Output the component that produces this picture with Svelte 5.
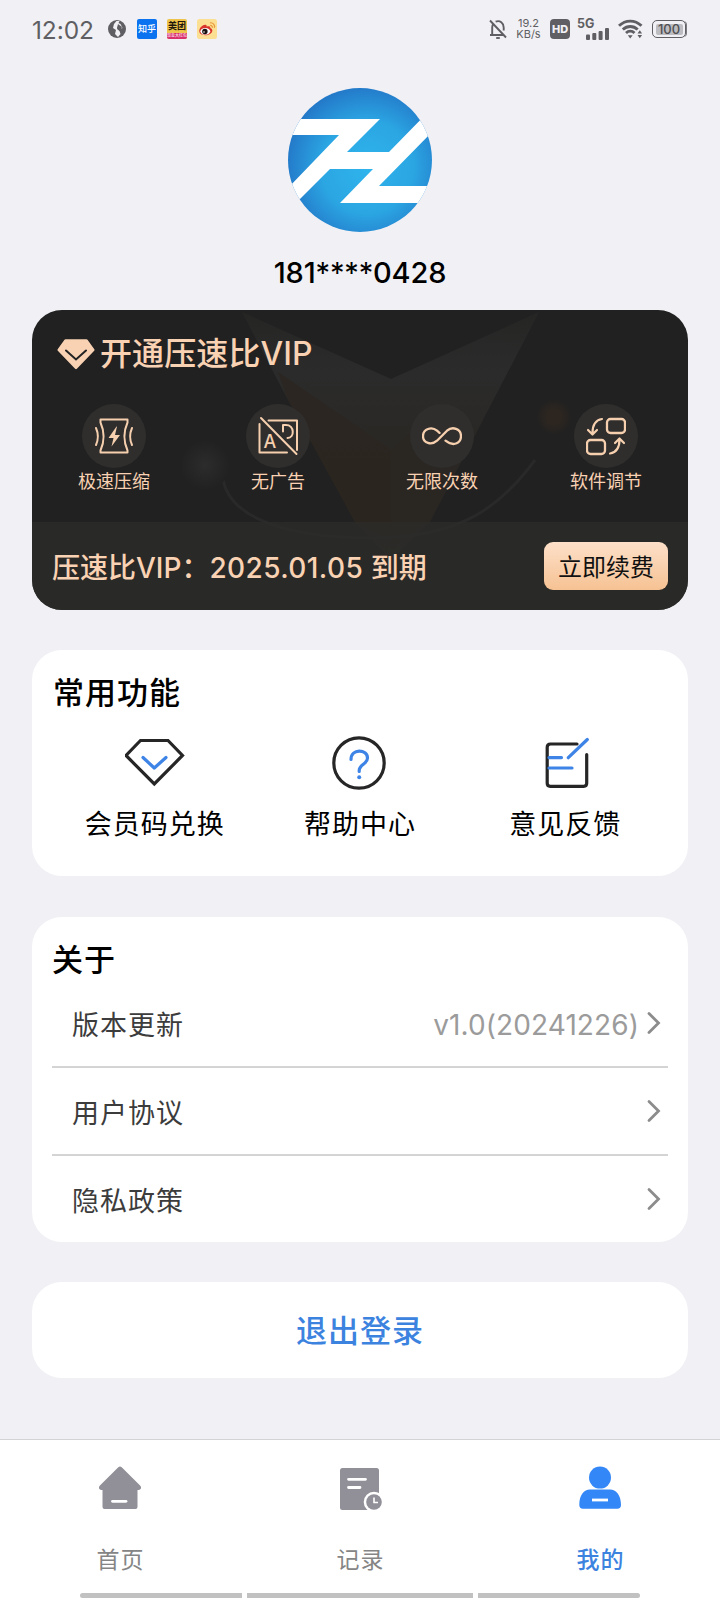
<script lang="ts">
  const perks = [
    { id: "compress", label: "极速压缩" },
    { id: "noad", label: "无广告" },
    { id: "unlimited", label: "无限次数" },
    { id: "adjust", label: "软件调节" },
  ];

  const features = [
    { id: "redeem", label: "会员码兑换" },
    { id: "help", label: "帮助中心" },
    { id: "feedback", label: "意见反馈" },
  ];

  const aboutRows = [
    { label: "版本更新", value: "v1.0(20241226)" },
    { label: "用户协议", value: "" },
    { label: "隐私政策", value: "" },
  ];

  const tabs = [
    { id: "home", label: "首页" },
    { id: "history", label: "记录" },
    { id: "mine", label: "我的" },
  ];

  let activeTab = $state("mine");
</script>

<div class="page">
  <header class="status-bar">
    <span class="time">12:02</span>
    <svg class="globe" width="18" height="18" viewBox="0 0 18 18">
      <circle cx="9" cy="9" r="9" fill="#5f5f63" />
      <path d="M8.500 1 6 4 5 8l3 2-1 4 3 3 2.500-3-1-3-2.500-2 1-3 2 3 2.500-1-2-4-2-1 1-2z" fill="#f1f0f5" />
      <path d="m10 4 4 3-2 4-3-3z" fill="#5f5f63" />
    </svg>
    <span class="app-icon zhihu">知乎</span>
    <span class="app-icon meituan"><b>美团</b><i>现金大红包</i></span>
    <svg class="app-icon" width="20" height="20" viewBox="0 0 20 20">
      <rect width="20" height="20" rx="1.5" fill="#fbe094" />
      <path d="M2.300 12c0-3.500 4.200-7 6.800-6 .7.3.6 1 .5 1.600 1.800-.8 4-.6 3.700 1.300 1.400.5 2.300 1.500 2 3-.5 2.500-3.500 4.300-7 4.300-3.600 0-6-1.700-6-4.200z" fill="#d9352b" />
      <ellipse cx="8.300" cy="12.300" rx="4.900" ry="3.300" fill="#fff" />
      <circle cx="7.900" cy="12.500" r="2.700" fill="#18110f" />
      <circle cx="7" cy="13" r=".8" fill="#fff" />
      <path d="M13.200 6.500c1.400-.2 2.500 1 2.100 2.300M13 3.800c3-.5 5.300 2.200 4.400 5" fill="none" stroke="#e8983a" stroke-width="1.200" />
    </svg>

    <div class="status-right">
      <svg width="18" height="20" viewBox="0 0 18 20" fill="none" stroke="#5f5f63" stroke-width="1.900">
        <path d="M3.200 16V8.500c0-1.400.4-2.600 1.100-3.600M6.600 2.700C11 .9 14.700 4 14.700 8.500v3M1 16h13.500M1 1.500l16 17" />
        <path d="M7.200 19h3.600" />
      </svg>
      <span class="speed"><span>19.2</span><span>KB/s</span></span>
      <span class="hd">HD</span>
      <span class="signal">
        <span>5G</span>
        <svg width="24" height="12" viewBox="0 0 24 12" fill="#5f5f63">
          <rect x="0" y="6.500" width="4" height="5.500" rx="1" />
          <rect x="6.300" y="5" width="4" height="7" rx="1" />
          <rect x="12.600" y="3" width="4" height="9" rx="1" />
          <rect x="19" y="0" width="4" height="12" rx="1" />
        </svg>
      </span>
      <svg class="wifi" width="25" height="20" viewBox="0 0 25 20">
        <g fill="none" stroke="#5f5f63" stroke-width="2.900">
          <path d="M1 6.800c6.500-6.300 16-6.300 22.500 0" />
          <path d="M4.800 10.500c4.400-4 10.500-4 14.900 0" />
          <path d="M8 14c2.600-2.300 6-2.300 8.500 0" />
        </g>
        <path d="M9.800 16.300h4.900L12.200 19.500zM19.500 14.500l2.300-3.300 2.300 3.300zM19.500 16h4.600l-2.300 3.300z" fill="#5f5f63" />
      </svg>
      <span class="battery"><span>100</span></span>
    </div>
  </header>

  <section class="profile">
    <svg width="144" height="144" viewBox="0 0 144 144">
      <defs>
        <radialGradient id="logoFill" cx=".55" cy=".55" r=".58">
          <stop offset="0" stop-color="#2fb4ec" />
          <stop offset=".55" stop-color="#2ba6e3" />
          <stop offset="1" stop-color="#2376c7" />
        </radialGradient>
        <clipPath id="logoClip"><circle cx="72" cy="72" r="72" /></clipPath>
      </defs>
      <circle cx="72" cy="72" r="72" fill="url(#logoFill)" />
      <g clip-path="url(#logoClip)" fill="#fff">
        <path d="M0 31H92L59 64H101L144 20V44L91 98H144V115H52L85 81H42L0 123V100L51 47H0Z" />
      </g>
    </svg>
    <div class="phone">181<span>****</span>0428</div>
  </section>

  <section class="vip">
    <svg class="vip-art" width="656" height="300" viewBox="0 0 656 300">
      <defs>
        <linearGradient id="starFill" x1="0" y1="0" x2="0" y2="1">
          <stop offset="0" stop-color="#252624" />
          <stop offset=".25" stop-color="#2b2b2b" />
          <stop offset=".5" stop-color="#2a2825" />
          <stop offset=".8" stop-color="#2a2622" />
          <stop offset="1" stop-color="#292827" />
        </linearGradient>
        <radialGradient id="greyDot">
          <stop offset="0" stop-color="#2c2c2c" />
          <stop offset="1" stop-color="#212121" />
        </radialGradient>
        <radialGradient id="brownDot">
          <stop offset=".4" stop-color="#2d2620" />
          <stop offset="1" stop-color="#212121" />
        </radialGradient>
      </defs>
      <path d="M210 2 359 69 507 2 398 212 359 250 323 212 256 90Z" fill="url(#starFill)" />
      <path d="m246 62 113 78v90l-36-18-67-122z" fill="#2c2520" opacity=".7" />
      <path d="M359 140 400 105V208l-41 30z" fill="#2c2622" opacity=".6" />
      <path d="M192 150C180 205 250 228 340 228S470 195 503 150" fill="none" stroke="#292929" stroke-width="3" />
      <circle cx="173" cy="155" r="25" fill="url(#greyDot)" />
      <circle cx="522" cy="107" r="18" fill="url(#brownDot)" />
    </svg>

    <div class="vip-main">
      <h2>
        <svg width="38" height="31" viewBox="0 0 38 31">
          <path d="M8.500 1.500h21L36.300 11 19 28.800 1.700 11z" fill="#f9d2b3" stroke="#f9d2b3" stroke-width="2.500" stroke-linejoin="round" />
          <path d="m9 11.500 10 9 10-9" fill="none" stroke="#232323" stroke-width="2" stroke-linecap="round" />
        </svg>
        <span>开通压速比VIP</span>
      </h2>
      <ul class="perks">
        {#each perks as perk (perk.id)}
          <li>
            <span class="perk-icon">
              <svg width="40" height="40" viewBox="0 0 40 40" fill="none" stroke="#f5cfae" stroke-width="2" stroke-linecap="round" stroke-linejoin="round">
                {#if perk.id === "compress"}
                  <path d="M6.500 3.500h27v3c-4 9-4 19 0 28v2h-27v-2c4-9 4-19 0-28z" />
                  <path d="M2 12c2.200 5 2.200 12 0 17M38 12c-2.200 5-2.200 12 0 17" />
                  <path d="m22.500 10.500-8 11.500h5l-2 8.500 8.500-11.500h-5l2-8.500z" fill="#f5cfae" stroke="none" />
                {:else if perk.id === "noad"}
                  <path d="M1.500 8v28.500H29M10.500 4.500H39V34M3 2l35.500 36" />
                  <text x="5.500" y="32" class="ad-letter">A</text>
                  <path d="M25 15.500V9h3c8.500 0 9 13 1.500 13" />
                {:else if perk.id === "unlimited"}
                  <path d="M23.500 25c9 7 15.500 1.500 15.500-4.500 0-7.500-8.500-10.300-14-5.500L15 25C9.500 30 1 27.500 1 20.500S9.500 10.200 15 15l2.500 2.200" transform="translate(0 -.3)" stroke-width="2.300" />
                {:else}
                  <rect x="21" y="3" width="18" height="14" rx="3.500" stroke-width="2.300" />
                  <rect x="1" y="24" width="18" height="14" rx="3.500" stroke-width="2.300" />
                  <path d="M16 3C10 4 6.500 9 6.500 17M2 14l4.500 4.500L11 14M24 37.500c6-1 9.500-6 9.500-14M29 27l4.500-4.500L38 27" stroke-width="2.200" />
                {/if}
              </svg>
            </span>
            <span>{perk.label}</span>
          </li>
        {/each}
      </ul>
    </div>
    <div class="vip-footer">
      <span class="expiry">压速比VIP：<span class="date">2025.01.05</span> 到期</span>
      <button class="renew">立即续费</button>
    </div>
  </section>

  <section class="card features">
    <h3>常用功能</h3>
    <div class="feature-grid">
      {#each features as feature (feature.id)}
        <button class="feature">
          <svg width="60" height="56" viewBox="0 0 60 56" fill="none" stroke="#262626" stroke-width="3.200" stroke-linecap="round" stroke-linejoin="round">
            {#if feature.id === "redeem"}
              <path d="M15.500 5.500h27.500L57.500 20.500 29.300 49 1 20.500z" stroke-linejoin="miter" />
              <path d="m18 22.500 11.300 10.500 11.700-10.500" stroke="#3d84e6" />
            {:else if feature.id === "help"}
              <circle cx="29" cy="28" r="25.200" />
              <path d="M21 24.500c0-11.500 16.500-10.500 16.500-1.500 0 6-8.300 6.500-8.300 12.500v1" stroke="#3d84e6" />
              <circle cx="29.200" cy="42.300" r="2" fill="#3d84e6" stroke="none" />
            {:else}
              <path d="M42 9H15.500q-3.300 0-3.300 3.300v36q0 3 3 3h33.500q3 0 3-3V19.500" />
              <path d="M14 22.600h12.500M14 33h23M33.300 22.700l19-18.200" stroke="#3d84e6" />
            {/if}
          </svg>
          <span>{feature.label}</span>
        </button>
      {/each}
    </div>
  </section>

  <section class="card about">
    <h3>关于</h3>
    {#each aboutRows as row (row.label)}
      <div class="about-row">
        <span>{row.label}</span>
        <span class="value">{row.value}</span>
        <svg width="14" height="24" viewBox="0 0 14 24" fill="none" stroke="#8c8c8c" stroke-width="2.800" stroke-linecap="round">
          <path d="m2 2.500 9.500 9.500L2 21.500" />
        </svg>
      </div>
    {/each}
  </section>

  <button class="card logout">退出登录</button>

  <nav class="tabbar">
    {#each tabs as tab (tab.id)}
      <button class="tab" class:active={activeTab === tab.id} onclick={() => (activeTab = tab.id)}>
        <svg width="44" height="44" viewBox="0 0 44 44" fill="currentColor">
          {#if tab.id === "home"}
            <path d="M20.300 1.200q1.700-1.500 3.400 0L42.300 19.800c1.700 1.800.4 4.200-1.800 4.200h-1v17q0 2-2 2h-31q-2 0-2-2V24h-1C1.300 24 0 21.600 1.700 19.800z" />
            <path d="M14.500 35.300h13.500" stroke="#fff" stroke-width="2.800" stroke-linecap="round" />
          {:else if tab.id === "history"}
            <rect x="2" y="2" width="39" height="42" rx="2.500" />
            <path d="M10.500 13.300H27.500M10.500 21.500H22" stroke="#fff" stroke-width="2.800" stroke-linecap="round" />
            <circle cx="36" cy="36" r="10.300" fill="#fff" />
            <circle cx="36" cy="36" r="7.800" />
            <path d="M36 31.500V36.500h4" fill="none" stroke="#fff" stroke-width="1.600" />
          {:else}
            <circle cx="22" cy="11.600" r="11" />
            <path d="M12 23.600h20c6 0 11 5.500 11 15.500q0 3.700-3.700 3.700H5q-3.700 0-3.700-3.700c0-10 4.700-15.500 10.700-15.500z" />
            <path d="M14 34h16" stroke="#fff" stroke-width="2.800" />
          {/if}
        </svg>
        <span>{tab.label}</span>
      </button>
    {/each}
    <div class="gesture-bar"><i></i><i></i><i></i></div>
  </nav>
</div>

<style>
  :global(body) {
    background: #f1f0f5;
  }

  .page {
    width: 720px;
    height: 1600px;
    display: flex;
    flex-direction: column;
    overflow: hidden;
    background: #f1f0f5;
    color: #000;
    font-family: Inter, "Noto Sans CJK SC", sans-serif;
  }

  .page * {
    box-sizing: border-box;
  }

  svg {
    display: block;
    flex: none;
  }

  button {
    border: 0;
    padding: 0;
    background: none;
    font: inherit;
    color: inherit;
  }

  h2,
  h3,
  ul {
    margin: 0;
    padding: 0;
    list-style: none;
  }

  .status-bar {
    height: 58px;
    flex: none;
    display: flex;
    align-items: center;
    padding: 0 32px 0 32px;
    color: #5f5f63;
  }

  .time {
    width: 76px;
    padding-top: 2px;
    font-size: 24.5px;
    letter-spacing: -0.1px;
    line-height: 56px;
  }

  .globe {
    margin-right: 11px;
  }

  .app-icon {
    width: 20px;
    height: 20px;
    margin-right: 10px;
    border-radius: 2px;
    overflow: hidden;
    flex: none;
  }

  .zhihu {
    background: #0b73f0;
    color: #fff;
    font-size: 9px;
    font-weight: 500;
    line-height: 20px;
    text-align: center;
    white-space: nowrap;
  }

  .meituan {
    display: flex;
    flex-direction: column;
    background: #edc34a;
    color: #21180d;
    text-align: center;
    white-space: nowrap;
  }

  .meituan b {
    font-size: 9px;
    line-height: 14px;
  }

  .meituan i {
    background: #d92f6c;
    color: #fff;
    font-size: 4px;
    font-style: normal;
    line-height: 6px;
  }

  .status-right {
    margin-left: auto;
    display: flex;
    align-items: center;
  }

  .speed {
    display: flex;
    flex-direction: column;
    width: 25px;
    margin: 0 9px 0 9px;
    font-size: 11px;
    line-height: 11px;
    text-align: center;
    white-space: nowrap;
  }

  .hd {
    width: 20px;
    height: 20px;
    border-radius: 4px;
    background: #5f5f63;
    color: #f1f0f5;
    font-size: 11px;
    font-weight: 800;
    line-height: 20px;
    text-align: center;
  }

  .signal {
    width: 33px;
    height: 21px;
    margin: 0 8px 0 7px;
    display: flex;
    flex-direction: column;
    font-size: 12.5px;
    font-weight: 700;
    line-height: 10px;
  }

  .signal svg {
    align-self: flex-end;
    margin-top: -1px;
  }

  .wifi {
    margin-right: 9px;
  }

  .battery {
    display: flex;
    align-items: center;
    justify-content: center;
    width: 34px;
    height: 18px;
    margin-right: 2px;
    border: 1.5px solid #5f5f63;
    border-radius: 5px;
    box-shadow: 2px 0 0 -1px #7b7b7f;
  }

  .battery span {
    width: 27px;
    height: 11px;
    border-radius: 2px;
    background: #bdbdc1;
    color: #4f4f53;
    font-size: 13px;
    font-weight: 500;
    line-height: 11px;
    text-align: center;
  }

  .profile {
    flex: none;
    height: 252px;
    padding-top: 30px;
    display: flex;
    flex-direction: column;
    align-items: center;
  }

  .phone {
    margin-top: 21px;
    display: flex;
    font-size: 29px;
    font-weight: 500;
    line-height: 40px;
    letter-spacing: -0.15px;
    white-space: nowrap;
  }

  .phone span {
    font-weight: 400;
  }

  .vip {
    position: relative;
    flex: none;
    width: 656px;
    height: 300px;
    margin: 0 auto;
    border-radius: 30px;
    overflow: hidden;
    background: #212121;
    color: #f9d2b3;
  }

  .vip-art {
    position: absolute;
    inset: 0;
  }

  .vip-main {
    position: relative;
    height: 212px;
    padding-top: 20px;
  }

  .vip h2 {
    display: flex;
    align-items: center;
    gap: 5px;
    height: 48px;
    padding-left: 25px;
    font-size: 32px;
    font-weight: 500;
    line-height: 48px;
    letter-spacing: 0.1px;
  }

  .perks {
    display: grid;
    grid-template-columns: repeat(4, 1fr);
    margin-top: 26px;
    font-size: 18px;
  }

  .perks li {
    display: flex;
    flex-direction: column;
    align-items: center;
    line-height: 28px;
  }

  .perk-icon {
    display: grid;
    place-items: center;
    width: 64px;
    height: 64px;
    border-radius: 50%;
    background: #2f2e2d;
  }

  .ad-letter {
    font-family: Inter, sans-serif;
    font-size: 18px;
    font-weight: 500;
    fill: #f5cfae;
    stroke: none;
  }

  .vip-footer {
    position: relative;
    display: flex;
    align-items: center;
    justify-content: space-between;
    height: 88px;
    padding: 0 20px;
    background: rgb(44 44 42 / 75%);
  }

  .expiry {
    padding-top: 4px;
    font-size: 28px;
    font-weight: 500;
    line-height: 40px;
    white-space: nowrap;
  }

  .date {
    letter-spacing: 0.4px;
  }

  .renew {
    width: 124px;
    height: 48px;
    padding-top: 3px;
    border-radius: 9px;
    background: linear-gradient(#fde0c9, #f6c293);
    color: #111;
    font-size: 24px;
    line-height: 45px;
  }

  .card {
    flex: none;
    width: 656px;
    margin: 40px auto 0;
    border-radius: 30px;
    background: #fff;
  }

  h3 {
    padding-left: 1px;
    font-size: 31px;
    font-weight: 500;
    line-height: 44px;
    letter-spacing: 1px;
  }

  .features {
    height: 226px;
    padding: 21px 20px 0;
  }

  .feature-grid {
    display: grid;
    grid-template-columns: repeat(3, 1fr);
    margin-top: 20px;
  }

  .feature {
    display: flex;
    flex-direction: column;
    align-items: center;
    gap: 14px;
    font-size: 27px;
    line-height: 40px;
    letter-spacing: 1px;
  }

  .about {
    height: 325px;
    margin-top: 41px;
    padding: 22px 20px 0;
  }

  .about h3 {
    padding-left: 0;
    line-height: 41px;
  }

  .about-row {
    display: flex;
    align-items: center;
    height: 88px;
    padding: 0 7px 0 20px;
    border-bottom: 2px solid #d4d4d4;
    color: #3c3c3c;
    font-size: 27px;
    letter-spacing: 1px;
  }

  .about-row:last-child {
    border-bottom: 0;
    height: 86px;
  }

  .about-row svg {
    margin-top: -1px;
  }

  .value {
    margin: 0 8px 0 auto;
    padding-top: 3px;
    color: #9b9b9b;
    font-size: 28px;
    letter-spacing: 0.1px;
  }

  .logout {
    height: 96px;
    padding-top: 2px;
    color: #3c83df;
    font-size: 31px;
    font-weight: 500;
    line-height: 94px;
    letter-spacing: 1px;
  }

  .tabbar {
    flex: none;
    display: grid;
    grid-template-columns: repeat(3, 1fr);
    grid-template-rows: 153px 7px;
    height: 161px;
    margin-top: auto;
    border-top: 1px solid #d3d3d6;
    background: #fff;
  }

  .tab {
    display: flex;
    flex-direction: column;
    align-items: center;
    padding-top: 26px;
    color: #918f97;
    font-size: 23px;
    letter-spacing: 1px;
  }

  .tab span {
    margin-top: 32px;
    padding-left: 1px;
    line-height: 36px;
    color: #858585;
  }

  .tab.active {
    color: #3487f7;
  }

  .tab.active span {
    color: #3c83df;
    font-weight: 500;
  }

  .gesture-bar {
    grid-column: 1 / -1;
    display: grid;
    grid-template-columns: 162px 226px 162px;
    gap: 5px;
    width: 560px;
    height: 5px;
    margin: 0 auto;
    border-radius: 3px;
    overflow: hidden;
  }

  .gesture-bar i {
    background: #c1c1c1;
  }
</style>
